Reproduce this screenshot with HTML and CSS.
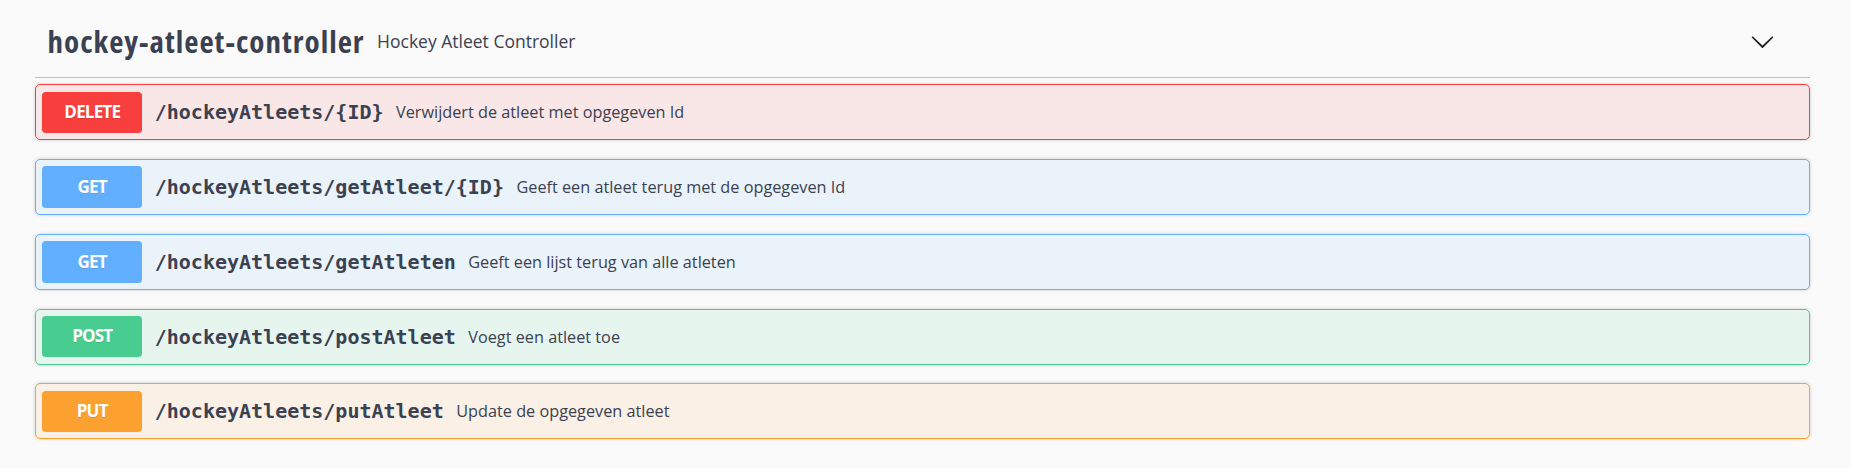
FILE: index.html
```html
<!DOCTYPE html>
<html lang="nl">
<head>
<meta charset="utf-8">
<title>hockey-atleet-controller</title>
<link rel="stylesheet" href="styles.css">
</head>
<body>
<div class="wrapper">
  <section class="tag-section">
    <h3 class="tag-header">
      <span class="tag-name">hockey-atleet-controller</span>
      <small class="tag-desc">Hockey Atleet Controller</small>
      <button class="expand" type="button" aria-label="collapse">
        <svg width="25" height="25" viewBox="0 0 20 20" aria-hidden="true"><path d="M17.418 6.109c.272-.268.709-.268.979 0s.271.701 0 .969l-7.908 7.83c-.27.268-.707.268-.979 0l-7.908-7.830c-.27-.268-.27-.701 0-.969.271-.268.709-.268.979 0L10 13.25l7.418-7.141z"/></svg>
      </button>
    </h3>
    <div class="ops">
      <div class="opblock op-delete">
        <span class="method">DELETE</span>
        <span class="path">/hockeyAtleets/{ID}</span>
        <span class="desc">Verwijdert de atleet met opgegeven Id</span>
      </div>
      <div class="opblock op-get">
        <span class="method">GET</span>
        <span class="path">/hockeyAtleets/getAtleet/{ID}</span>
        <span class="desc">Geeft een atleet terug met de opgegeven Id</span>
      </div>
      <div class="opblock op-get">
        <span class="method">GET</span>
        <span class="path">/hockeyAtleets/getAtleten</span>
        <span class="desc">Geeft een lijst terug van alle atleten</span>
      </div>
      <div class="opblock op-post">
        <span class="method">POST</span>
        <span class="path">/hockeyAtleets/postAtleet</span>
        <span class="desc">Voegt een atleet toe</span>
      </div>
      <div class="opblock op-put">
        <span class="method">PUT</span>
        <span class="path">/hockeyAtleets/putAtleet</span>
        <span class="desc">Update de opgegeven atleet</span>
      </div>
    </div>
  </section>
</div>
</body>
</html>
```

FILE: styles.css
```css
html, body {
  margin: 0;
  padding: 0;
  background: #fafafa;
}

body {
  font-family: "Open Sans", "Noto Sans", sans-serif;
  color: #3b4151;
}

.wrapper {
  padding: 5px 41px 0 35px;
}

.tag-header {
  display: flex;
  align-items: center;
  height: 47px;
  margin: 0 0 6.25px;
  padding: 12.5px 35px 12.5px 12.5px;
  border-bottom: 1px solid rgba(59, 65, 81, 0.3);
  font-weight: 400;
}

.tag-name {
  font-size: 31px;
  font-weight: 700;
  font-stretch: 75%;
  letter-spacing: 1px;
  color: #3b4151;
}

.tag-desc {
  flex: 1;
  padding: 0 12.5px;
  font-size: 17.5px;
  font-weight: 400;
  color: #3b4151;
}

.expand {
  display: flex;
  border: none;
  background: none;
  padding: 0;
  margin: 0;
}

.expand svg {
  display: block;
  fill: #222;
}

.opblock {
  display: flex;
  align-items: center;
  padding: 6.25px;
  margin: 0 0 18.75px;
  border: 1px solid #000;
  border-radius: 5px;
  box-shadow: 0 0 3.75px rgba(0, 0, 0, 0.19);
}

.method {
  min-width: 100px;
  padding: 7.5px 0;
  line-height: 26.5px;
  text-align: center;
  border-radius: 3.75px;
  color: #fff;
  font-size: 17px;
  font-weight: 700;
  letter-spacing: -0.8px;
  text-shadow: 0 1.25px 0 rgba(0, 0, 0, 0.1);
}

.path {
  padding: 0 12.5px;
  font-family: "DejaVu Sans Mono", "Liberation Mono", monospace;
  font-size: 20px;
  font-weight: 700;
  color: #3b4151;
}

.desc {
  flex: 1;
  font-size: 16.25px;
  color: #3b4151;
}

.op-delete {
  border-color: #f93e3e;
  background: rgba(249, 62, 62, 0.1);
}
.op-delete .method { background: #f93e3e; }

.op-get {
  border-color: #61affe;
  background: rgba(97, 175, 254, 0.1);
}
.op-get .method { background: #61affe; }

.op-post {
  border-color: #49cc90;
  background: rgba(73, 204, 144, 0.1);
}
.op-post .method { background: #49cc90; }

.op-put {
  border-color: #fca130;
  background: rgba(252, 161, 48, 0.1);
}
.op-put .method { background: #fca130; }
```
